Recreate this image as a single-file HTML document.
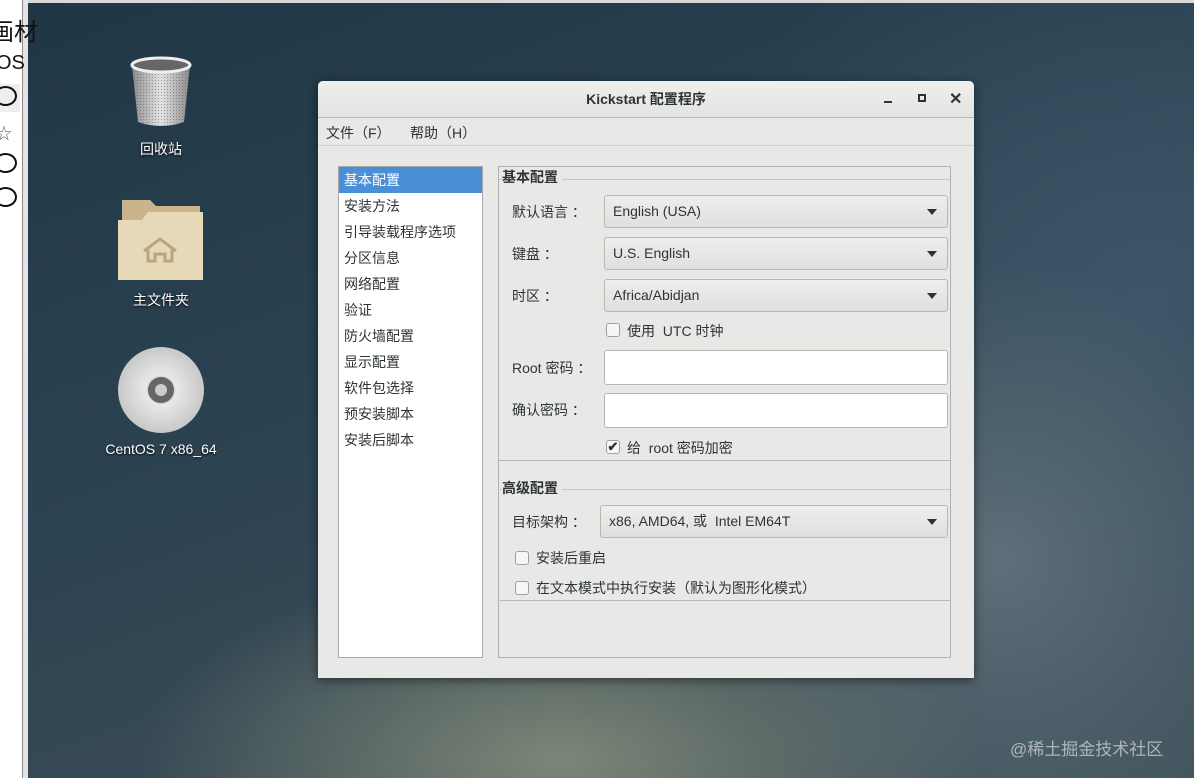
<!DOCTYPE html><html><head><meta charset="utf-8"><style>
*{margin:0;padding:0;box-sizing:border-box}
body{width:1194px;height:778px;overflow:hidden;position:relative;font-family:"Liberation Sans","Noto Sans CJK SC",sans-serif;font-size:14px;color:#2e3436;
background:radial-gradient(ellipse 420px 200px at 560px 760px,#7c8677 0%,rgba(110,120,110,0) 100%),radial-gradient(ellipse 300px 300px at 1000px 560px,#5d6f78 0%,rgba(80,100,110,0) 100%),radial-gradient(ellipse 500px 400px at 1150px 300px,#3d5668 0%,rgba(60,80,100,0) 100%),linear-gradient(160deg,#1f3645 0%,#2c4352 45%,#3a4b55 75%,#445560 100%)}
.a{position:absolute}
.ic{color:#fff;font-size:14px;text-shadow:0 1px 2px #000;text-align:center;width:160px}
.dlg{left:318px;top:81px;width:656px;height:597px;background:#e8e8e7;border-radius:5px 5px 0 0;box-shadow:0 2px 10px rgba(0,0,0,.5)}
.dd{background:linear-gradient(#eeeeec,#dfdfdd);border:1px solid #b6b6b3;border-radius:3px;height:33px;padding-left:8px;line-height:31px}
.dd:after{content:"";position:absolute;right:10px;top:13px;border:5px solid transparent;border-top:6px solid #2e3436}
.in{background:#fff;border:1px solid #b6b6b3;border-radius:3px;height:35px}
.cb{width:14px;height:14px;border:1px solid #a0a0a0;border-radius:3px;background:#f6f6f5}
</style></head><body>
<div class="a" style="left:0;top:0;width:1194px;height:3px;background:#d8d8d8"></div>
<div class="a" style="left:0;top:0;width:23px;height:778px;background:#fff;border-right:1px solid #8a8a8a"></div>
<div class="a" style="left:23px;top:0;width:5px;height:778px;background:#e4e4e8"></div>
<div class="a" style="top:12px;font-size:24px;color:#111;left:-10px">画材</div>
<div class="a" style="left:-4px;top:52px;font-size:20px;color:#111">OS</div>
<div class="a" style="left:0;top:84px;width:20px;height:28px;background:#eee"></div>
<div class="a" style="left:-6px;top:86px;width:23px;height:20px;border:2px solid #111;border-radius:50%"></div>
<div class="a" style="left:-4px;top:120px;font-size:16px;color:#666">☆</div>
<div class="a" style="left:-6px;top:153px;width:23px;height:20px;border:2px solid #111;border-radius:50%"></div>
<div class="a" style="left:-6px;top:187px;width:23px;height:20px;border:2px solid #111;border-radius:50%"></div>

<svg class="a" style="left:128px;top:56px" width="66" height="74"><defs><linearGradient id="t" x1="0" x2="1"><stop offset="0" stop-color="#8a8a8a"/><stop offset=".5" stop-color="#e4e4e4"/><stop offset="1" stop-color="#8a8a8a"/></linearGradient><pattern id="m" width="3" height="3" patternUnits="userSpaceOnUse"><rect width="3" height="3" fill="none"/><rect width="1" height="1" fill="#555"/></pattern></defs><path d="M4 9 L10 66 Q33 74 56 66 L62 9 Z" fill="url(#t)"/><path d="M4 9 L10 66 Q33 74 56 66 L62 9 Z" fill="url(#m)" opacity=".5"/><ellipse cx="33" cy="9" rx="29" ry="7" fill="#666" stroke="#eee" stroke-width="3"/></svg>
<div class="a ic" style="left:81px;top:139px">回收站</div>
<svg class="a" style="left:118px;top:198px" width="86" height="84"><path d="M4 2 H32 L38 8 H82 V60 H4Z" fill="#c9b48e"/><path d="M0 22 H24 L30 14 H85 V82 H0Z" fill="#e7d8b8"/><path d="M26 53 L42 41 L58 53 M30 51 V63 H37 V56 H47 V63 H54 V51" stroke="#b9a583" stroke-width="3" fill="none"/></svg>
<div class="a ic" style="left:81px;top:290px">主文件夹</div>
<svg class="a" style="left:117px;top:346px" width="88" height="88"><defs><radialGradient id="c"><stop offset=".2" stop-color="#999"/><stop offset=".35" stop-color="#e8e8e8"/><stop offset="1" stop-color="#c8c8c8"/></radialGradient></defs><circle cx="44" cy="44" r="43" fill="url(#c)"/><circle cx="44" cy="44" r="13" fill="#666"/><circle cx="44" cy="44" r="6" fill="#ccc"/></svg>
<div class="a ic" style="left:81px;top:441px">CentOS 7 x86_64</div>

<div class="a" style="left:1010px;top:735px;color:rgba(255,255,255,.55);font-size:17px">@稀土掘金技术社区</div>

<div class="a dlg">
 <div class="a" style="left:0;top:0;width:656px;height:37px;background:linear-gradient(#efefee,#e3e3e1);border-bottom:1px solid #b8b8b6;border-radius:5px 5px 0 0;text-align:center;line-height:36px;font-weight:bold;font-size:14px">Kickstart 配置程序</div>
 <div class="a" style="left:566px;top:20px;width:8px;height:2px;background:#2e3436"></div>
 <div class="a" style="left:600px;top:13px;width:8px;height:8px;border:2px solid #2e3436"></div>
 <div class="a" style="left:631px;top:8px;font-size:16px;font-weight:bold">✕</div>
 <div class="a" style="left:0;top:38px;width:656px;height:27px;border-bottom:1px solid #cfcfcd"></div>
 <div class="a" style="left:8px;top:42px">文件（F）</div>
 <div class="a" style="left:92px;top:42px">帮助（H）</div>

 <div class="a" style="left:20px;top:85px;width:145px;height:492px;background:#fff;border:1px solid #a8a8a6;line-height:26px">
  <div style="background:#4a90d9;color:#fff;padding-left:5px;height:26px">基本配置</div>
  <div style="padding-left:5px">安装方法</div><div style="padding-left:5px">引导装载程序选项</div><div style="padding-left:5px">分区信息</div><div style="padding-left:5px">网络配置</div><div style="padding-left:5px">验证</div><div style="padding-left:5px">防火墙配置</div><div style="padding-left:5px">显示配置</div><div style="padding-left:5px">软件包选择</div><div style="padding-left:5px">预安装脚本</div><div style="padding-left:5px">安装后脚本</div>
 </div>

 <div class="a" style="left:180px;top:85px;width:453px;height:492px;border:1px solid #b0b0ae"></div>
 <div class="a" style="left:181px;top:98px;width:451px;height:282px;border-top:1px solid #c4c4c2;border-bottom:1px solid #b8b8b6"></div>
 <div class="a" style="left:184px;top:86px;font-weight:bold;background:#e8e8e7;padding-right:4px">基本配置</div>
 <div class="a" style="left:194px;top:121px">默认语言 ：</div>
 <div class="a" style="left:194px;top:163px">键盘 ：</div>
 <div class="a" style="left:194px;top:205px">时区 ：</div>
 <div class="a dd" style="left:286px;top:114px;width:344px">English (USA)</div>
 <div class="a dd" style="left:286px;top:156px;width:344px">U.S. English</div>
 <div class="a dd" style="left:286px;top:198px;width:344px">Africa/Abidjan</div>
 <div class="a cb" style="left:288px;top:242px"></div>
 <div class="a" style="left:309px;top:240px">使用&nbsp; UTC 时钟</div>
 <div class="a" style="left:194px;top:277px">Root 密码 ：</div>
 <div class="a in" style="left:286px;top:269px;width:344px"></div>
 <div class="a" style="left:194px;top:319px">确认密码 ：</div>
 <div class="a in" style="left:286px;top:312px;width:344px"></div>
 <div class="a cb" style="left:288px;top:359px;font-size:13px;line-height:12px;text-align:center;font-weight:bold">✔</div>
 <div class="a" style="left:309px;top:357px">给&nbsp; root 密码加密</div>

 <div class="a" style="left:182px;top:408px;width:450px;height:112px;border-top:1px solid #c4c4c2;border-bottom:1px solid #b8b8b6"></div>
 <div class="a" style="left:184px;top:397px;font-weight:bold;background:#e8e8e7;padding-right:4px">高级配置</div>
 <div class="a" style="left:194px;top:431px">目标架构 ：</div>
 <div class="a dd" style="left:282px;top:424px;width:348px">x86, AMD64, 或&nbsp; Intel EM64T</div>
 <div class="a cb" style="left:197px;top:470px"></div>
 <div class="a" style="left:218px;top:467px">安装后重启</div>
 <div class="a cb" style="left:197px;top:500px"></div>
 <div class="a" style="left:218px;top:497px">在文本模式中执行安装（默认为图形化模式）</div>
</div>
</body></html>
